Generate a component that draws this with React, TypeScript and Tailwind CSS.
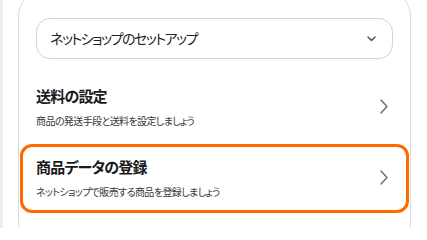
import React from 'react';

// ============================================================
// TYPES
// ============================================================

interface SetupStep {
  title: string;
  description: string;
  active?: boolean;
}

// ============================================================
// CONSTANTS
// ============================================================

const JP_FONT = "font-['Noto_Sans_CJK_JP','Noto_Sans',sans-serif] [font-feature-settings:'palt']";

const STEPS: SetupStep[] = [
  { title: '送料の設定', description: '商品の発送手段と送料を設定しましょう' },
  {
    title: '商品データの登録',
    description: 'ネットショップで販売する商品を登録しましょう',
    active: true,
  },
];

const ChevronDown = () => (
  <svg width="9" height="6" viewBox="0 0 9 6" fill="none">
    <path d="M1 1L4.5 4.5L8 1" stroke="#555" strokeWidth="1.5" strokeLinecap="round" strokeLinejoin="round" />
  </svg>
);

const ChevronRight = () => (
  <svg width="8" height="15" viewBox="0 0 8 15" fill="none">
    <path d="M1 1L7 7.5L1 14" stroke="#666" strokeWidth="1.3" strokeLinecap="round" strokeLinejoin="round" />
  </svg>
);

const StepRow: React.FC<{ step: SetupStep }> = ({ step }) => (
  <button
    className={
      'flex w-full items-center rounded-[12px] border-[3px] pl-[13px] pr-[18px] pt-[9px] pb-[11px] text-left ' +
      (step.active ? 'border-[#ff6a00]' : 'border-transparent')
    }
  >
    <div className="flex-1">
      <span className="block text-[15px] leading-[22px] font-bold tracking-[-0.8px] text-[#1a1a1a]">
        {step.title}
      </span>
      <span className="mt-[7px] block text-[10px] leading-[14px] tracking-[-0.6px] text-[#383838]">
        {step.description}
      </span>
    </div>
    <ChevronRight />
  </button>
);

export default function App() {
  return (
    <div className={'flex h-[228px] w-[427px] overflow-hidden bg-white ' + JP_FONT}>
      <div className="w-[3px] shrink-0 bg-[#eceef1]" />
      <div className="ml-[15px] mt-[-10px] h-[260px] w-[393px] shrink-0 rounded-[26px] border border-[#d9d9d9] bg-white">
        <div className="px-[17px] pt-[27px]">
          <div className="flex h-[41px] items-center justify-between rounded-[14px] border border-[#d4d4d4] pl-[13px] pr-[16px]">
            <span className="text-[14px] tracking-[-1.5px] text-[#222]">ネットショップのセットアップ</span>
            <ChevronDown />
          </div>
        </div>
        <div className="mt-[14px] flex flex-col gap-[2px] px-[1px]">
          {STEPS.map(step => (
            <StepRow key={step.title} step={step} />
          ))}
        </div>
      </div>
    </div>
  );
}
